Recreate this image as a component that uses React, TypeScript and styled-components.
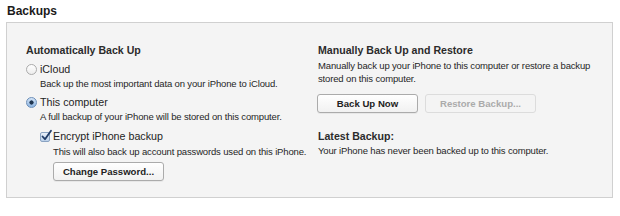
import React from "react";
import styled, { createGlobalStyle } from "styled-components";

const GlobalStyle = createGlobalStyle`
  html, body { margin: 0; padding: 0; background: #ffffff; }
  body { font-family: "Liberation Sans", Arial, sans-serif; color: #1a1a1a; }
`;

const Page = styled.div`
  width: 620px;
  height: 216px;
  padding: 4px 7px 0 6px;
  box-sizing: border-box;
`;

const Title = styled.h1`
  margin: 0 0 3px 1px;
  font-size: 12px;
  font-weight: bold;
  line-height: 15px;
  color: #1b1b1b;
`;

const Panel = styled.div`
  display: grid;
  grid-template-columns: 292px 1fr;
  height: 176px;
  box-sizing: border-box;
  padding: 20px 0 0 19px;
  background: #f4f4f4;
  border: 1px solid #d0d0d0;
`;

const Column = styled.div`
  display: flex;
  flex-direction: column;
`;

const Heading = styled.div<{ $top?: number; $gap?: number }>`
  font-size: 10.6px;
  font-weight: bold;
  line-height: 14px;
  color: #2b2b2b;
  margin-top: ${(p) => p.$top ?? 0}px;
  margin-bottom: ${(p) => p.$gap ?? 0}px;
`;

const Text = styled.div<{ $indent?: number; $top?: number }>`
  font-size: 9.5px;
  letter-spacing: -0.15px;
  line-height: 13px;
  color: #262626;
  padding-left: ${(p) => p.$indent ?? 0}px;
  margin-top: ${(p) => p.$top ?? 0}px;
`;

const OptionRow = styled.label<{ $indent?: number; $top?: number }>`
  display: flex;
  align-items: center;
  gap: 3px;
  font-size: 10.7px;
  line-height: 15px;
  color: #1e1e1e;
  margin-left: ${(p) => p.$indent ?? 0}px;
  margin-top: ${(p) => p.$top ?? 0}px;
`;

const Radio = styled.span<{ $on?: boolean }>`
  width: 11px;
  height: 11px;
  border-radius: 50%;
  box-sizing: border-box;
  border: 1px solid ${(p) => (p.$on ? "#6c8fb9" : "#ababab")};
  background: ${(p) =>
    p.$on
      ? "radial-gradient(circle, #1f3550 0 1.8px, transparent 2.4px), linear-gradient(#d3e3f5, #8db5e2)"
      : "linear-gradient(#ffffff, #ececec)"};
  flex: none;
`;

const Check = styled.span`
  width: 10px;
  height: 10px;
  box-sizing: border-box;
  border: 1px solid #8aa3c2;
  border-radius: 2px;
  background: linear-gradient(#e8eff8, #bcd1ea);
  flex: none;
  position: relative;
  svg {
    position: absolute;
    left: -1px;
    top: -4px;
  }
`;

const Button = styled.button<{ $w: number; $disabled?: boolean }>`
  width: ${(p) => p.$w}px;
  height: 19px;
  padding: 0;
  font-family: "Liberation Sans", Arial, sans-serif;
  font-size: 9.6px;
  font-weight: bold;
  color: ${(p) => (p.$disabled ? "#ababab" : "#222222")};
  background: ${(p) => (p.$disabled ? "#f4f4f4" : "linear-gradient(#ffffff, #f1f1f1)")};
  border: 1px solid ${(p) => (p.$disabled ? "#dcdcdc" : "#ababab")};
  border-radius: 3px;
  box-shadow: ${(p) => (p.$disabled ? "none" : "0 1px 0 rgba(0,0,0,0.05)")};
`;

const ButtonRow = styled.div<{ $indent?: number; $top?: number }>`
  display: flex;
  gap: 7px;
  padding-left: ${(p) => p.$indent ?? 0}px;
  margin-top: ${(p) => p.$top ?? 0}px;
`;

export default function App() {
  return (
    <>
      <GlobalStyle />
      <Page>
        <Title>Backups</Title>
        <Panel>
          <Column>
            <Heading $gap={5}>Automatically Back Up</Heading>
            <OptionRow>
              <Radio />
              iCloud
            </OptionRow>
            <Text $indent={14}>Back up the most important data on your iPhone to iCloud.</Text>
            <OptionRow $top={5}>
              <Radio $on />
              This computer
            </OptionRow>
            <Text $indent={14}>A full backup of your iPhone will be stored on this computer.</Text>
            <OptionRow $indent={14} $top={6}>
              <Check>
                <svg width="13" height="13" viewBox="0 0 13 13">
                  <path d="M2.5 7.5 L5 10.2 L11 1.8" fill="none" stroke="#1f3b66" strokeWidth="1.8" strokeLinecap="round" strokeLinejoin="round" />
                </svg>
              </Check>
              Encrypt iPhone backup
            </OptionRow>
            <Text $indent={27} $top={1}>This will also back up account passwords used on this iPhone.</Text>
            <ButtonRow $indent={27} $top={4}>
              <Button $w={111}>Change Password...</Button>
            </ButtonRow>
          </Column>
          <Column>
            <Heading $gap={2}>Manually Back Up and Restore</Heading>
            <Text>
              Manually back up your iPhone to this computer or restore a backup
              <br />
              stored on this computer.
            </Text>
            <ButtonRow $indent={0} $top={9} style={{ marginLeft: -1 }}>
              <Button $w={101}>Back Up Now</Button>
              <Button $w={111} $disabled>
                Restore Backup...
              </Button>
            </ButtonRow>
            <Heading $top={16} $gap={1}>Latest Backup:</Heading>
            <Text>Your iPhone has never been backed up to this computer.</Text>
          </Column>
        </Panel>
      </Page>
    </>
  );
}
